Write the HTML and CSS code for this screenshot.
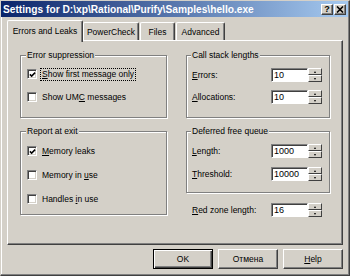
FILE: index.html
```html
<!DOCTYPE html>
<html>
<head>
<meta charset="utf-8">
<link rel="stylesheet" href="styles.css">
</head>
<body>
<div class="window">
  <div class="titlebar">
    <span class="title">Settings for D:\xp\Rational\Purify\Samples\hello.exe</span>
    <div class="caption-btns">
      <span class="cap-btn cap-help">?</span>
      <span class="cap-btn cap-close"><svg width="8" height="7" viewBox="0 0 8 7"><path d="M1 0.5 L7 6.5 M7 0.5 L1 6.5" stroke="#000" stroke-width="1.6" fill="none"/></svg></span>
    </div>
  </div>
  <div class="content">
    <div class="tabs">
      <div class="tab tab-active">Errors and Leaks</div>
      <div class="tab tab-power">PowerCheck</div>
      <div class="tab tab-files">Files</div>
      <div class="tab tab-adv">Advanced</div>
    </div>
    <div class="panel">
      <div class="col">
        <fieldset class="group g-supp">
          <legend>Error suppression</legend>
          <div class="check"><span class="box"><svg width="8" height="8" viewBox="0 0 8 8"><path d="M1 3.3 L3 5.3 L7 1.3" stroke="#000" stroke-width="1.7" fill="none"/></svg></span><span class="lbl focus"><u>S</u>how first message only</span></div>
          <div class="check"><span class="box"></span><span class="lbl">Show UM<u>C</u> messages</span></div>
        </fieldset>
        <fieldset class="group g-report">
          <legend>Report at exit</legend>
          <div class="check"><span class="box"><svg width="8" height="8" viewBox="0 0 8 8"><path d="M1 3.3 L3 5.3 L7 1.3" stroke="#000" stroke-width="1.7" fill="none"/></svg></span><span class="lbl"><u>M</u>emory leaks</span></div>
          <div class="check"><span class="box"></span><span class="lbl">Memory in <u>u</u>se</span></div>
          <div class="check"><span class="box"></span><span class="lbl">Handles <u>i</u>n use</span></div>
        </fieldset>
      </div>
      <div class="col">
        <fieldset class="group g-stack">
          <legend>Call stack lengths</legend>
          <div class="field"><span class="flabel"><u>E</u>rrors:</span><span class="edit">10</span><span class="spin"><span class="spin-up"><span class="arr-up"></span></span><span class="spin-dn"><span class="arr-dn"></span></span></span></div>
          <div class="field"><span class="flabel"><u>A</u>llocations:</span><span class="edit">10</span><span class="spin"><span class="spin-up"><span class="arr-up"></span></span><span class="spin-dn"><span class="arr-dn"></span></span></span></div>
        </fieldset>
        <fieldset class="group g-defer">
          <legend>Deferred free queue</legend>
          <div class="field"><span class="flabel"><u>L</u>ength:</span><span class="edit">1000</span><span class="spin"><span class="spin-up"><span class="arr-up"></span></span><span class="spin-dn"><span class="arr-dn"></span></span></span></div>
          <div class="field"><span class="flabel"><u>T</u>hreshold:</span><span class="edit">10000</span><span class="spin"><span class="spin-up"><span class="arr-up"></span></span><span class="spin-dn"><span class="arr-dn"></span></span></span></div>
        </fieldset>
        <div class="field redzone"><span class="flabel"><u>R</u>ed zone length:</span><span class="edit">16</span><span class="spin"><span class="spin-up"><span class="arr-up"></span></span><span class="spin-dn"><span class="arr-dn"></span></span></span></div>
      </div>
    </div>
    <div class="buttons">
      <div class="btn btn-default">OK</div>
      <div class="btn">Отмена</div>
      <div class="btn"><u>H</u>elp</div>
    </div>
  </div>
</div>
</body>
</html>
```
FILE: styles.css
```css
* { box-sizing: border-box; }
html, body { margin: 0; padding: 0; background: #d4d0c8; }
body { font-family: "Liberation Sans", Arial, sans-serif; font-size: 8.5px; color: #000; }
u { text-decoration: underline; text-underline-offset: 1px; }

.window {
  width: 350px;
  height: 276px;
  background: #d4d0c8;
  border-top: 1px solid #d4d0c8;
  border-left: 1px solid #d4d0c8;
  border-right: 1px solid #404040;
  border-bottom: 1px solid #404040;
  box-shadow: inset -1px -1px 0 #808080, inset 1px 1px 0 #fff;
  overflow: hidden;
}

.titlebar {
  height: 16px;
  margin: 0 1px 0 0;
  background: linear-gradient(to right, #0a246a, #a6caf0);
  display: flex;
  align-items: center;
  justify-content: space-between;
  padding: 0 2px 0 2px;
}
.title {
  color: #fff;
  font-weight: bold;
  font-size: 10.2px;
  white-space: nowrap;
}
.caption-btns { display: flex; gap: 1px; }
.cap-btn {
  width: 12px;
  height: 11px;
  background: #d4d0c8;
  border: 1px solid;
  border-color: #fff #404040 #404040 #fff;
  box-shadow: inset -1px -1px 0 #808080;
  display: flex;
  align-items: center;
  justify-content: center;
  font-weight: bold;
  font-size: 9px;
  line-height: 9px;
}

.content { padding: 3px 6px 0 6px; }

.tabs {
  display: flex;
  align-items: flex-end;
  height: 20px;
}
.tab {
  height: 18px;
  border-top: 1px solid #fff;
  border-left: 1px solid #fff;
  border-right: 1px solid #404040;
  box-shadow: inset -1px 0 0 #808080;
  border-radius: 2px 2px 0 0;
  display: flex;
  align-items: center;
  justify-content: center;
  white-space: nowrap;
  padding-top: 1px;
}
.tab-active {
  width: 76px;
  height: 22px;
  margin-bottom: -2px;
  position: relative;
  z-index: 1;
  background: #d4d0c8;
  padding-bottom: 3px;
}
.tab-power { width: 56px; }
.tab-files { width: 35px; margin-left: 1px; }
.tab-adv { width: 49px; margin-left: 1px; }

.panel {
  height: 205px;
  border: 1px solid;
  border-color: #fff #404040 #404040 #fff;
  box-shadow: inset -1px -1px 0 #808080;
  display: grid;
  grid-template-columns: 147px 144px;
  column-gap: 19px;
  align-items: start;
  padding: 9px 0 0 12px;
}
.col { display: flex; flex-direction: column; }

.group {
  margin: 0;
  border: 1px solid #808080;
  box-shadow: 1px 1px 0 #fff, inset 1px 1px 0 #fff;
  min-width: 0;
  display: flex;
  flex-direction: column;
}
.group legend {
  line-height: 10px;
  height: 10px;
  padding: 0 1px;
  margin-left: -1px;
  background: #d4d0c8;
  white-space: nowrap;
}
.g-supp { padding: 7px 0 13px 6px; gap: 9px; }
.g-report { padding: 8px 0 8px 6px; gap: 10px; margin-top: 8px; }
.g-stack { padding: 8px 0 13px 5px; gap: 8px; }
.g-defer { padding: 8px 0 11px 5px; gap: 9px; margin-top: 8px; }

.check { display: flex; align-items: center; height: 14px; }
.box {
  width: 10px;
  height: 10px;
  background: #fff;
  border: 1px solid;
  border-color: #808080 #fff #fff #808080;
  box-shadow: inset 1px 1px 0 #404040, inset -1px -1px 0 #d4d0c8;
  display: flex;
  align-items: center;
  justify-content: center;
  flex: none;
}
.box svg { display: block; margin: 1px 0 0 1px; }
.lbl { margin-left: 3px; padding: 0 1px; line-height: 11px; white-space: nowrap; border: 1px solid transparent; }
.focus { border: 1px dotted #000; }

.field { display: flex; align-items: center; height: 14px; }
.redzone { margin-top: 10px; padding-left: 6px; }
.flabel { width: 79px; white-space: nowrap; }
.edit {
  width: 37px;
  height: 14px;
  background: #fff;
  border: 1px solid;
  border-color: #808080 #fff #fff #808080;
  box-shadow: inset 1px 1px 0 #404040;
  padding: 0 0 0 2px;
  line-height: 12px;
  font-size: 9px;
}
.spin { display: flex; flex-direction: column; width: 14px; height: 14px; }
.spin-up, .spin-dn {
  height: 7px;
  background: #d4d0c8;
  border: 1px solid;
  border-color: #fff #404040 #404040 #fff;
  display: flex;
  align-items: center;
  justify-content: center;
}
.arr-up, .arr-dn { width: 0; height: 0; border-left: 1.5px solid transparent; border-right: 1.5px solid transparent; }
.arr-up { border-bottom: 2px solid #000; }
.arr-dn { border-top: 2px solid #000; }

.buttons {
  display: flex;
  justify-content: flex-end;
  gap: 5px;
  margin-top: 4px;
  padding-right: 0;
}
.btn {
  width: 60px;
  height: 20px;
  border: 1px solid;
  border-color: #fff #404040 #404040 #fff;
  box-shadow: inset -1px -1px 0 #808080;
  display: flex;
  align-items: center;
  justify-content: center;
}
.btn-default {
  border-color: #000;
  box-shadow: inset 1px 1px 0 #fff, inset -1px -1px 0 #404040, inset -2px -2px 0 #808080;
}
```
